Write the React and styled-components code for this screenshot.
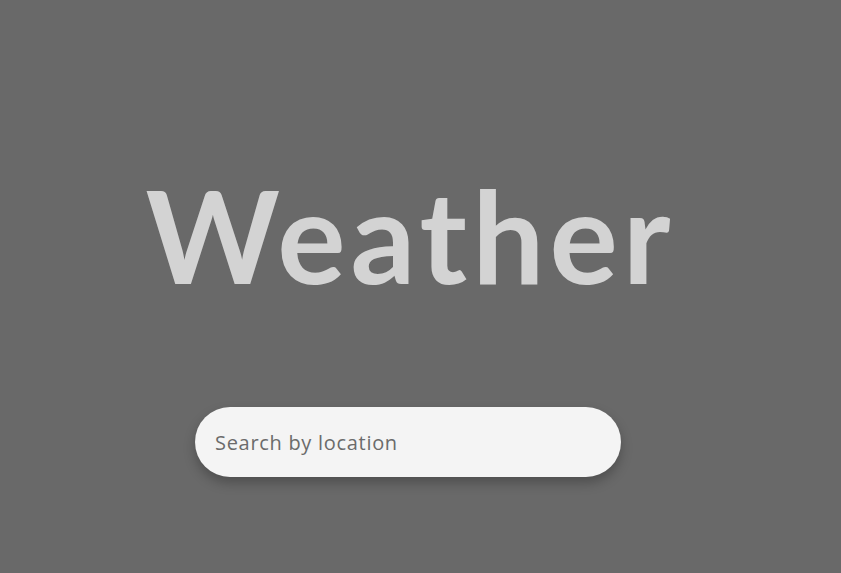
import React from 'react'
import styled, { createGlobalStyle } from 'styled-components'

const Global = createGlobalStyle`
  html, body {
    margin: 0;
    padding: 0;
    background: #696969;
  }
  body {
    font-family: Lato, 'Noto Sans', sans-serif;
  }
`

const Page = styled.main`
  box-sizing: border-box;
  width: 816px;
  height: 573px;
  display: flex;
  flex-direction: column;
  align-items: center;
  padding-top: 160px;
`

const Title = styled.h1`
  margin: 0;
  padding-left: 5px;
  font-family: Lato, sans-serif;
  font-weight: 700;
  font-size: 128px;
  line-height: 150px;
  letter-spacing: 5px;
  color: #d3d3d3;
`

const Search = styled.input`
  box-sizing: border-box;
  margin-top: 97px;
  width: 426px;
  height: 70px;
  padding: 0 20px;
  border: none;
  outline: none;
  border-radius: 35px;
  background: #f4f4f4;
  box-shadow: 0 6px 12px rgba(0, 0, 0, 0.25);
  font-family: 'Open Sans', sans-serif;
  font-size: 20px;
  letter-spacing: 0.7px;
  color: #333;

  &::placeholder {
    color: #6b6b6b;
  }
`

const App = () =>
  <>
    <Global />
    <Page>
      <Title>Weather</Title>
      <Search type='text' placeholder='Search by location' />
    </Page>
  </>

export default App
